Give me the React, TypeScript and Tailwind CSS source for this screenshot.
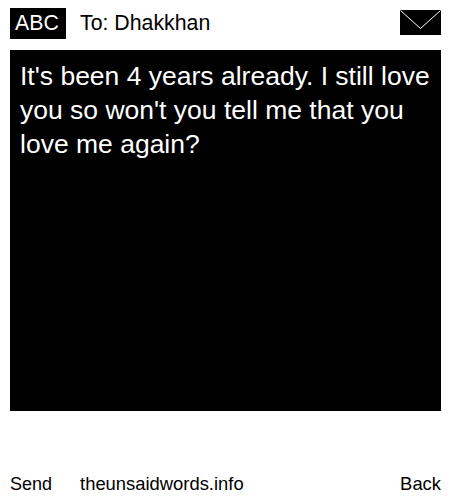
export default function App() {
  return (
    <div className="w-[450px] h-[500px] bg-white text-black pl-[10px] pr-[9px] pt-2 flex flex-col font-['Liberation_Sans',Arial,sans-serif]">
      <div className="flex items-center h-[31px] mb-[11px]">
        <div className="bg-black text-white w-[56px] h-[31px] flex items-center justify-center pr-[2px] text-[21.3px]">ABC</div>
        <div className="ml-[14px] text-[21.3px]">To: Dhakkhan</div>
        <svg className="ml-auto mb-[3px]" width="41" height="25" viewBox="0 0 41 25">
          <rect width="41" height="25" fill="#000" />
          <path d="M0.5 0.5 L20.5 18.5 L40.5 0.5" fill="none" stroke="#fff" strokeWidth="1" />
        </svg>
      </div>
      <div className="bg-black text-white h-[361px] px-[10px] py-[9px] text-[26.5px] leading-[34px]">
        It's been 4 years already. I still love you so won't you tell me that you love me again?
      </div>
      <div className="flex mt-auto mb-[4px] text-[18.4px] leading-[24px]">
        <span className="text-[18px]">Send</span>
        <span className="ml-[28px]">theunsaidwords.info</span>
        <span className="ml-auto">Back</span>
      </div>
    </div>
  )
}
